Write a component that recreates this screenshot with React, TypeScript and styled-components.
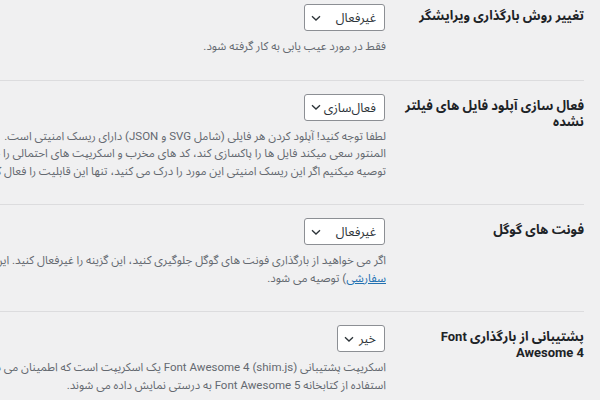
import React from "react";
import styled, { createGlobalStyle } from "styled-components";

const GlobalStyle = createGlobalStyle`
  html, body {
    margin: 0;
    padding: 0;
    background: #f0f0f1;
  }
  body {
    font-family: Roboto, "Noto Sans Arabic UI", "Noto Sans Arabic", sans-serif;
    color: #3c434a;
  }
`;

const Page = styled.div`
  direction: rtl;
  width: 600px;
  height: 400px;
  overflow: hidden;
  background: #f0f0f1;
`;

const Table = styled.div`
  display: flex;
  flex-direction: column;
  margin-top: -9px;
  padding-right: 16px;
`;

const Row = styled.div`
  display: flex;
  align-items: flex-start;
  border-bottom: 1px solid #dcdcde;
`;

const Heading = styled.div`
  flex: 0 0 199px;
  box-sizing: border-box;
  padding: 17px 0 18px 18px;
  font-size: 13px;
  font-weight: 700;
  line-height: 16px;
  color: #1d2327;
`;

const Field = styled.div`
  flex: 1;
  min-width: 0;
  padding: 13px 0 24px;
`;

const Select = styled.div<{ $width: number }>`
  display: flex;
  align-items: center;
  justify-content: space-between;
  box-sizing: border-box;
  width: ${(p) => p.$width}px;
  height: 27px;
  padding: 0 8px 0 6px;
  background: #fff;
  border: 1px solid #8c8f94;
  border-radius: 3px;
  font-size: 12.6px;
  color: #2c3338;
`;

const Description = styled.div`
  margin-top: 7px;
  margin-right: -1px;
  font-size: 11.5px;
  line-height: 17.5px;
  color: #646970;
`;

const Line = styled.div`
  white-space: nowrap;
`;

const Link = styled.a`
  color: #2271b1;
  text-decoration: underline;
`;

const Chevron = () => (
  <svg width="10" height="10" viewBox="0 0 10 10">
    <path d="M1 3.2 L5 7 L9 3.2" fill="none" stroke="#2c3338" strokeWidth="1.3" />
  </svg>
);

interface SettingProps {
  title: React.ReactNode;
  value: string;
  width: number;
  children: React.ReactNode;
}

const Setting: React.FC<SettingProps> = ({ title, value, width, children }) => (
  <Row>
    <Heading>{title}</Heading>
    <Field>
      <Select $width={width}>
        <span>{value}</span>
        <Chevron />
      </Select>
      <Description>{children}</Description>
    </Field>
  </Row>
);

export default function App() {
  return (
    <Page>
      <GlobalStyle />
      <Table>
        <Setting title="تغییر روش بارگذاری ویرایشگر" value="غیرفعال" width={81}>
          <Line>فقط در مورد عیب یابی به کار گرفته شود.</Line>
        </Setting>
        <Setting title="فعال سازی آپلود فایل های فیلتر نشده" value="فعال‌سازی" width={81}>
          <Line>لطفا توجه کنید! آپلود کردن هر فایلی (شامل SVG و JSON) دارای ریسک امنیتی است.</Line>
          <Line>
            المنتور سعی میکند فایل ها را پاکسازی کند، کد های مخرب و اسکریپت های احتمالی را حذف کند، اما همچنان
            ریسک وجود دارد.
          </Line>
          <Line>
            توصیه میکنیم اگر این ریسک امنیتی این مورد را درک می کنید، تنها این قابلیت را فعال کنید.
          </Line>
        </Setting>
        <Setting title="فونت های گوگل" value="غیرفعال" width={81}>
          <Line>
            اگر می خواهید از بارگذاری فونت های گوگل جلوگیری کنید، این گزینه را غیرفعال کنید. این کار در
            صورت استفاده از فونت های (
          </Line>
          <Line>
            <Link href="#">سفارشی</Link>) توصیه می شود.
          </Line>
        </Setting>
        <Setting title="پشتیبانی از بارگذاری Font Awesome 4" value="خیر" width={48}>
          <Line>
            اسکریپت پشتیبانی Font Awesome 4 (shim.js) یک اسکریپت است که اطمینان می دهد آیکون های انتخاب
            شده قبلی
          </Line>
          <Line>استفاده از کتابخانه Font Awesome 5 به درستی نمایش داده می شوند.</Line>
        </Setting>
      </Table>
    </Page>
  );
}
